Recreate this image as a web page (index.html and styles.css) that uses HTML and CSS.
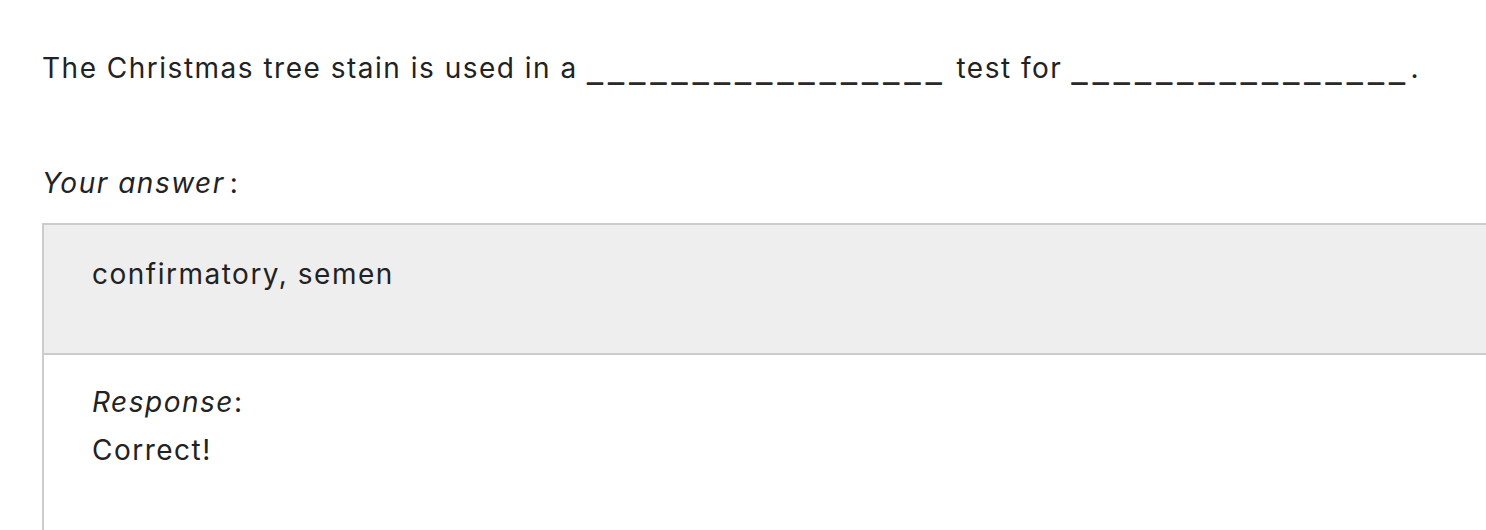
FILE: index.html
```html
<!DOCTYPE html>
<html>
<head>
<meta charset="utf-8">
<link rel="stylesheet" href="styles.css">
</head>
<body>
<div class="page">
  <p class="question">The Christmas tree stain is used in a <span class="blank">_________________</span> test for <span class="blank">________________</span>.</p>
  <p class="label"><em>Your answer</em><span class="colon">:</span></p>
  <div class="answer-box">
    <div class="answer">confirmatory, semen</div>
    <div class="feedback">
      <div class="feedback-label"><em>Response</em>:</div>
      <div class="feedback-text">Correct!</div>
    </div>
  </div>
</div>
</body>
</html>
```
FILE: styles.css
```css
html, body {
  margin: 0;
  padding: 0;
  overflow: hidden;
  background: #fff;
}
body {
  font-family: Inter, "Liberation Sans", sans-serif;
  font-size: 28px;
  color: #222;
  letter-spacing: 1.5px;
}
.page {
  padding: 47px 0 0 42px;
}
.question {
  margin: 0;
  line-height: 42px;
}
.blank {
  font-family: "Liberation Sans", sans-serif;
  letter-spacing: 5.6px;
  color: #2a2a2a;
  text-shadow: 0 0.6px 0 #2a2a2a;
}
.label {
  margin: 72px 0 0;
  line-height: 42px;
}
.colon {
  margin-left: 5px;
}
.answer-box {
  margin-top: 19px;
  width: 1500px;
  border-top: 2px solid #ccc;
  border-left: 2px solid #ccc;
}
.answer {
  background: #eee;
  padding: 28px 48px 0;
  height: 100px;
  line-height: 42px;
}
.feedback {
  border-top: 2px solid #ccc;
  padding: 26px 48px 80px;
}
.feedback-label {
  line-height: 42px;
}
.feedback-text {
  line-height: 54px;
}
```
